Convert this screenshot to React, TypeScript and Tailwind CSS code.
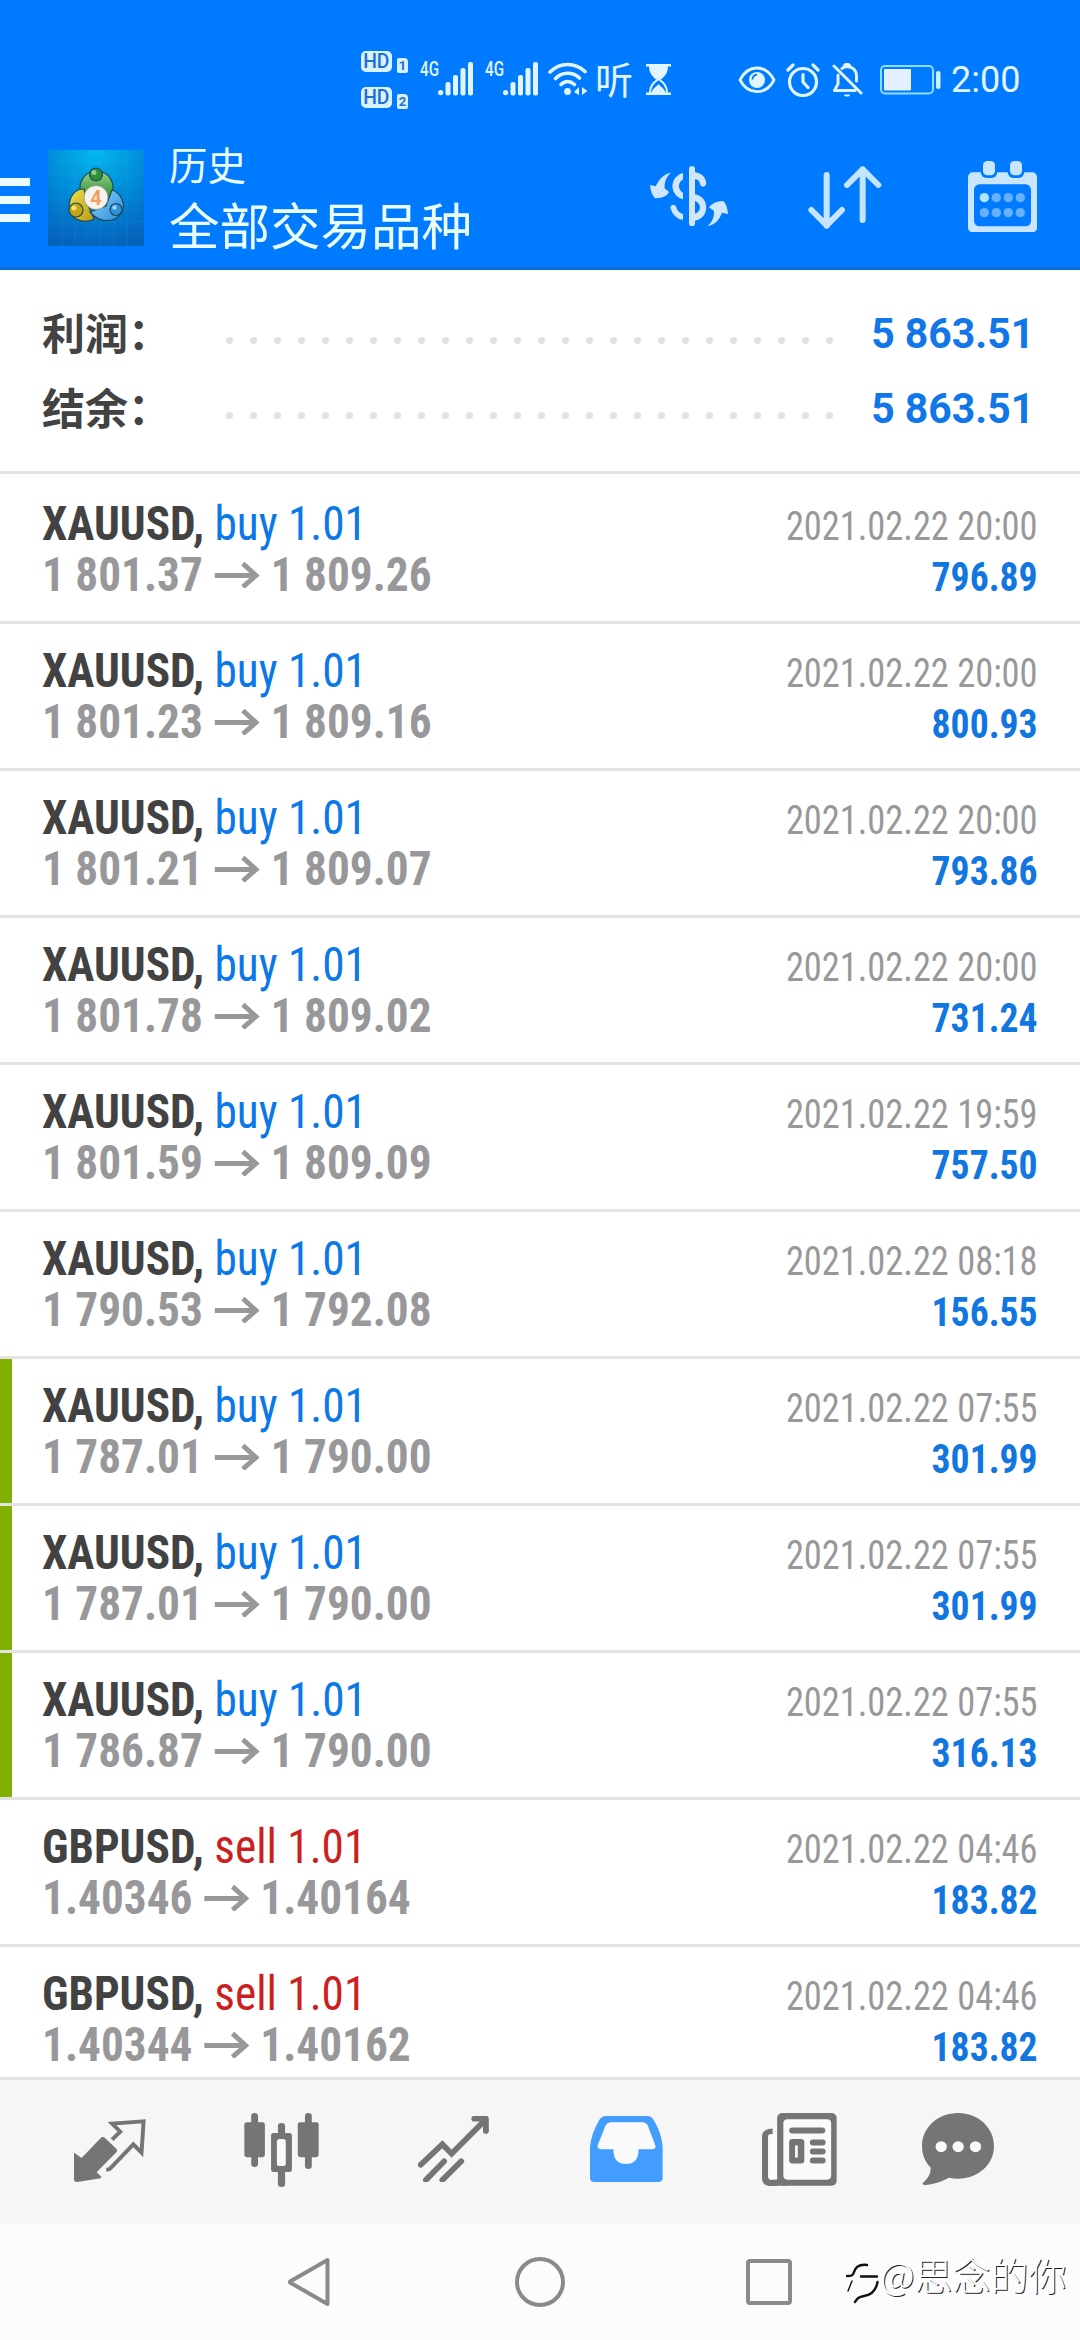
import { clsx } from "clsx";
import type { ReactNode } from "react";

interface Deal {
  symbol: string;
  side: "buy" | "sell";
  open: string;
  close: string;
  time: string;
  profit: string;
  marked?: boolean;
}

const DEALS: Deal[] = [
  { symbol: "XAUUSD", side: "buy", open: "1 801.37", close: "1 809.26", time: "2021.02.22 20:00", profit: "796.89" },
  { symbol: "XAUUSD", side: "buy", open: "1 801.23", close: "1 809.16", time: "2021.02.22 20:00", profit: "800.93" },
  { symbol: "XAUUSD", side: "buy", open: "1 801.21", close: "1 809.07", time: "2021.02.22 20:00", profit: "793.86" },
  { symbol: "XAUUSD", side: "buy", open: "1 801.78", close: "1 809.02", time: "2021.02.22 20:00", profit: "731.24" },
  { symbol: "XAUUSD", side: "buy", open: "1 801.59", close: "1 809.09", time: "2021.02.22 19:59", profit: "757.50" },
  { symbol: "XAUUSD", side: "buy", open: "1 790.53", close: "1 792.08", time: "2021.02.22 08:18", profit: "156.55" },
  { symbol: "XAUUSD", side: "buy", open: "1 787.01", close: "1 790.00", time: "2021.02.22 07:55", profit: "301.99", marked: true },
  { symbol: "XAUUSD", side: "buy", open: "1 787.01", close: "1 790.00", time: "2021.02.22 07:55", profit: "301.99", marked: true },
  { symbol: "XAUUSD", side: "buy", open: "1 786.87", close: "1 790.00", time: "2021.02.22 07:55", profit: "316.13", marked: true },
  { symbol: "GBPUSD", side: "sell", open: "1.40346", close: "1.40164", time: "2021.02.22 04:46", profit: "183.82" },
  { symbol: "GBPUSD", side: "sell", open: "1.40344", close: "1.40162", time: "2021.02.22 04:46", profit: "183.82" },
];

const SUMMARY = [
  { label: "利润：", value: "5 863.51" },
  { label: "结余：", value: "5 863.51" },
];

function HdBadge({ sim }: { sim: string }) {
  return (
    <div className="flex h-[22px] items-end gap-[5px]">
      <div className="flex h-[21px] w-[31px] items-center justify-center self-start rounded-[5px] bg-[#d8f2ff] text-[21px] leading-none font-medium text-[#1f6fd6]">
        <span className="scale-x-[0.92]">HD</span>
      </div>
      <div className="flex h-[15px] w-[11px] items-center justify-center rounded-[2px] rounded-tr-[4px] bg-[#d8f2ff] text-[13px] leading-none font-bold text-[#1f6fd6]">
        {sim}
      </div>
    </div>
  );
}

function Signal() {
  return (
    <div className="flex h-[34px] w-[53px]">
      <span className="h-4 w-[18px] origin-left scale-x-[0.76] text-[20px] leading-[15px] font-medium">4G</span>
      <svg className="h-[34px] w-[35px]" viewBox="0 0 35 34" fill="currentColor">
        <circle cx="2.6" cy="30.6" r="2.6" />
        <rect x="7.5" y="20" width="5" height="13.5" rx="2" />
        <rect x="15" y="13" width="5" height="20.5" rx="2" />
        <rect x="22.5" y="6" width="5" height="27.5" rx="2" />
        <rect x="30" y="0" width="5" height="33.5" rx="2" />
      </svg>
    </div>
  );
}

function StatusBar() {
  return (
    <div className="flex h-[120px] items-start pt-[51px] pl-[361px] text-[#e0f5ff]">
      <div className="flex w-[47px] flex-col gap-[14px]">
        <HdBadge sim="1" />
        <HdBadge sim="2" />
      </div>
      <div className="ml-3 flex gap-3 pt-[11px]">
        <Signal />
        <Signal />
      </div>
      <svg className="mt-[11px] ml-[10px] h-[34px] w-[40px]" viewBox="0 0 40 34" fill="none" stroke="currentColor" strokeWidth="3.6" strokeLinecap="round">
        <path d="M2 10C12 0 27 0 37 9.5" />
        <path d="M7.5 16.5C14 9.5 25 9.5 31.5 16" />
        <path d="M13 22.5C17 18.5 22 18.5 26.5 22.5" />
        <circle cx="19.5" cy="29.5" r="3.4" fill="currentColor" stroke="none" />
        <path d="M26 30l5-5v8zM34 25l5.5 4-5.5 4z" fill="currentColor" stroke="none" />
      </svg>
      <span className="mt-[8px] ml-[7px] w-[37px] font-['Noto_Sans_CJK_SC',sans-serif] text-[38px] leading-[38px]">听</span>
      <svg className="mt-[13px] ml-[14px] h-[31px] w-[26px]" viewBox="0 0 26 31" fill="currentColor">
        <path d="M0 0h25v2.6H0zM0 28.4h25V31H0zM3 2h19c0 8-4 10.500-7 13.500h-5C7 12.500 3 10 3 2z" />
        <path d="M12.500 15C7 19 4 22 4 29M12.500 15C18 19 21 22 21 29" fill="none" stroke="currentColor" strokeWidth="2" />
        <path d="M12.500 20c2 3 6 4 7 9H5.500c1-5 5-6 7-9z" />
      </svg>
      <svg className="mt-[15px] ml-[66px] h-[28px] w-[38px]" viewBox="0 0 38 28" fill="none" stroke="currentColor" strokeWidth="2.800">
        <path d="M2 14C10-2 28-2 36 14C28 29.500 10 29.500 2 14z" strokeLinejoin="round" />
        <circle cx="19" cy="14" r="8" fill="currentColor" stroke="none" />
        <path d="M14.500 13.500c0-3 1.500-4.500 4.500-4.800" stroke="#007aff" strokeWidth="1.800" />
      </svg>
      <svg className="mt-[12px] ml-[10px] h-[34px] w-[34px]" viewBox="0 0 34 34" fill="none" stroke="currentColor" strokeWidth="3.200" strokeLinecap="round" strokeLinejoin="round">
        <circle cx="17" cy="19" r="13.500" />
        <path d="M17 11.500V19l5 5.500M2 7l5-5M32 7l-5-5" />
      </svg>
      <svg className="mt-[12px] ml-[12px] h-[34px] w-[31px]" viewBox="0 0 31 34" fill="none" stroke="currentColor" strokeWidth="3" strokeLinecap="round" strokeLinejoin="round">
        <path d="M2 3l27 27" />
        <path d="M6 12v9l-3.500 6.500H23M10 5.500C11.500 4 13 3.500 15 3.500C21.500 4 24.500 8 24.500 13v5M12.500 2.500a3 2.500 0 0 1 5 0" />
        <path d="M12 31.500a3 2 0 0 0 6 0z" fill="currentColor" stroke="none" />
      </svg>
      <svg className="mt-[14px] ml-[17px] h-[30px] w-[61px]" viewBox="0 0 61 30">
        <rect x="1" y="1" width="52" height="27.500" rx="4" fill="none" stroke="#8fdcff" strokeWidth="2" />
        <rect x="4" y="4" width="27" height="21.500" rx="1" fill="#e3f0ff" />
        <rect x="56" y="6" width="4.500" height="18" rx="2" fill="#cdeeff" />
      </svg>
      <span className="mt-[8px] ml-[10px] text-[36px] leading-[42px]">2:00</span>
    </div>
  );
}

function AppLogo() {
  return (
    <svg className="ml-[18px] h-24 w-24" viewBox="0 0 96 96">
      <defs>
        <radialGradient id="sky" cx="0.5" cy="0" r="1">
          <stop offset="0" stopColor="#04b8ee" />
          <stop offset="0.5" stopColor="#008cd8" />
          <stop offset="1" stopColor="#0563bc" />
        </radialGradient>
        <linearGradient id="green" x1="0" y1="0" x2="0" y2="1">
          <stop offset="0" stopColor="#9bd08a" />
          <stop offset="1" stopColor="#1f8a26" />
        </linearGradient>
        <linearGradient id="gold" x1="0" y1="0" x2="1" y2="1">
          <stop offset="0" stopColor="#f0e04a" />
          <stop offset="1" stopColor="#b89c14" />
        </linearGradient>
        <linearGradient id="blue" x1="0" y1="0" x2="1" y2="1">
          <stop offset="0" stopColor="#8fd4ff" />
          <stop offset="1" stopColor="#2a8bd6" />
        </linearGradient>
      </defs>
      <rect width="96" height="96" fill="url(#sky)" />
      <path d="M0 13h96M0 24h96M0 36h96M0 48h96M0 60h96M0 72h96M0 84h96M14 0v96M27 0v96M40 0v96M53 0v96M66 0v96M79 0v96" stroke="#5fd0ff" strokeOpacity="0.1" />
      <g stroke="#1b4a5c" strokeWidth="1.200">
        <path d="M32 41C31 28 40 21 48 21C58 21 66 28 65 41L60 50L36 42z" fill="url(#green)" />
        <path d="M36 39C26 39 21 47 21 59C22 68 34 75 46 69L38 50z" fill="url(#gold)" />
        <path d="M64 40C73 43 78 54 74 62C68 73 52 74 42 62L58 56z" fill="url(#blue)" />
        <circle cx="48" cy="24.500" r="6.500" fill="#2f8f38" />
        <circle cx="28" cy="60" r="7" fill="#c3a414" />
        <circle cx="68" cy="59.500" r="6" fill="#2f8fdc" />
      </g>
      <circle cx="46" cy="22.500" r="2.500" fill="#8bcf86" />
      <circle cx="26" cy="58" r="2.500" fill="#f2e472" />
      <circle cx="66.500" cy="57.500" r="2.200" fill="#9ad6ff" />
      <circle cx="48" cy="47.500" r="12" fill="#f7f2f0" stroke="#8a9a8a" strokeWidth="0.800" />
      <text x="48" y="55" textAnchor="middle" fontSize="20" fontWeight="700" fontFamily="Roboto, sans-serif" fill="#f0a060">4</text>
    </svg>
  );
}

function Header() {
  return (
    <header className="h-[270px] border-b-[3px] border-[#0a6cdb] bg-[#007aff]">
      <StatusBar />
      <div className="flex h-[147px] items-start pt-[30px]">
        <div className="mt-[28px] flex w-[30px] flex-col gap-[10px]">
          <i className="h-2 bg-[#eafaff]" />
          <i className="h-2 bg-[#eafaff]" />
          <i className="h-2 bg-[#eafaff]" />
        </div>
        <AppLogo />
        <div className="-mt-[9px] ml-[25px] w-[481px] font-['Noto_Sans_CJK_SC',sans-serif] text-[#eafdff]">
          <div className="text-[38.5px] leading-[44px]">历史</div>
          <h1 className="mt-[8px] text-[50.5px] leading-[60px] font-normal">全部交易品种</h1>
        </div>
        <svg className="mt-4 h-[60px] w-[78px] text-[#cfe6fd]" viewBox="93 78 234 180" fill="currentColor">
          <path d="M155 98C140 113 136 128 137 145L150 156C144 169 132 173 109 175C100 168 95 152 93 135L110 139C120 119 132 103 155 98z" />
          <path d="M265 258C281 246 286 230 285 213L270 202C279 190 292 184 313 183C321 191 326 205 327 222L309 218C301 240 288 254 265 258z" />
          <path d="M192 99C150 110 150 166 192 178V158C176 150 176 128 192 118z" />
          <path d="M163 203Q170 227 192 231" fill="none" stroke="currentColor" strokeWidth="17" strokeLinecap="round" />
          <rect x="192" y="210" width="18" height="40" fill="#007aff" />
          <rect x="210" y="78" width="18" height="181" rx="9" />
          <path d="M228 97C248 99 260 112 262 130C260 142 248 144 244 134C242 124 237 118 228 118z" />
          <path d="M228 163C273 170 273 236 228 242V221C248 216 248 190 228 183z" />
        </svg>
        <svg className="mt-4 ml-[80px] h-[63px] w-[74px]" viewBox="568 78 222 189" fill="none" stroke="#c4e4ff" strokeWidth="18" strokeLinecap="round" strokeLinejoin="round">
          <path d="M624 105V257M578 210L624 256L670 210M732 240V88M685 135L732 88L779 135" />
        </svg>
        <svg className="mt-[11px] ml-[86px] h-[71px] w-[69px]" viewBox="1044 62 207 213">
          <rect x="1044" y="96" width="207" height="180" rx="14" fill="#c9e5ff" />
          <rect x="1062" y="132" width="171" height="126" rx="16" fill="#007aff" />
          <rect x="1082" y="56" width="50" height="57" rx="18" fill="#007aff" />
          <rect x="1163" y="56" width="50" height="57" rx="18" fill="#007aff" />
          <rect x="1089" y="62" width="36" height="43" rx="13" fill="#c9e5ff" />
          <rect x="1170" y="62" width="36" height="43" rx="13" fill="#c9e5ff" />
          <circle cx="1093" cy="172" r="14" fill="#b5e2ff" />
          <g fill="#66b0ff">
            <circle cx="1129" cy="172" r="14" />
            <circle cx="1165" cy="172" r="14" />
            <circle cx="1201" cy="172" r="14" />
            <circle cx="1093" cy="217" r="14" />
            <circle cx="1129" cy="217" r="14" />
            <circle cx="1165" cy="217" r="14" />
            <circle cx="1201" cy="217" r="14" />
          </g>
        </svg>
      </div>
    </header>
  );
}

function DealRow({ deal }: { deal: Deal }) {
  return (
    <li className="flex h-[147px] shrink-0 border-b-[3px] border-[#e3e3e3]">
      <div className={clsx("w-3 shrink-0", deal.marked && "bg-[#80b000]")} />
      <div className="flex flex-1 justify-between pt-[21px] pr-[42px] pl-[30px] font-['Roboto_Condensed',Roboto,sans-serif] [font-stretch:75%]">
        <div className="origin-left scale-x-[0.943] text-[48px] leading-[51px] font-bold whitespace-nowrap">
          <div className="text-[#424242]">
            {deal.symbol},{" "}
            <span className={clsx("font-normal", deal.side === "buy" ? "text-[#0a78e6]" : "text-[#cc1f1f]")}>{deal.side} 1.01</span>
          </div>
          <div className="flex items-center text-[#98989a]">
            {deal.open}
            <svg className="mr-[12px] ml-[12px] h-[26px] w-[48px]" viewBox="0 0 48 26" fill="none" stroke="currentColor" strokeWidth="5">
              <path d="M0 13.500H44M30 1.500L44 13.500L30 25" />
            </svg>
            {deal.close}
          </div>
        </div>
        <div className="pt-[3px] text-right text-[40px] leading-[51px] whitespace-nowrap">
          <div className="origin-right scale-x-[0.91] text-[#98989a]">{deal.time}</div>
          <div className="origin-right scale-x-[0.94] font-bold text-[#1176e0]">{deal.profit}</div>
        </div>
      </div>
    </li>
  );
}

function TabIcon({ className, viewBox, children }: { className: string; viewBox: string; children: ReactNode }) {
  return (
    <svg className={clsx("shrink-0", className)} viewBox={viewBox} preserveAspectRatio="none" fill="#757575">
      {children}
    </svg>
  );
}

function TabBar() {
  return (
    <nav className="flex h-[147px] shrink-0 items-start border-t-[3px] border-[#e3e3e3] bg-[#f6f6f6] pl-[74px]">
      <TabIcon className="mt-[39px] h-[63px] w-[72px]" viewBox="215 177 210 189">
        <path d="M299 230Q303 231 306 235L340 268V275L281 337L295 350L293 355L224 366Q215 366 215 358V278L220 281L237 294L293 234Q296 231 299 230z" />
        <path d="M326 239L350 215L326 191L418 184L412 278L388 253L321 325Q317 329 309 329" fill="none" stroke="#757575" strokeWidth="11.500" />
      </TabIcon>
      <TabIcon className="mt-[33px] ml-[98px] h-[74px] w-[75px]" viewBox="708 158 219 223">
        <rect x="729" y="158" width="20" height="163" rx="10" />
        <rect x="709" y="186" width="60" height="105" rx="7" />
        <rect x="886" y="158" width="20" height="169" rx="10" />
        <rect x="865" y="186" width="61" height="105" rx="7" />
        <rect x="807" y="188" width="21" height="193" rx="10" />
        <rect x="787" y="218" width="61" height="118" rx="7" />
        <rect x="804" y="236" width="26" height="82" rx="8" fill="#f9f9f9" />
      </TabIcon>
      <TabIcon className="mt-[36px] ml-[99px] h-[66px] w-[71px]" viewBox="1213 168 207 198">
        <path d="M1221 314L1284 253L1311 281L1405 184M1236 360L1289 304M1284 360L1339 304" fill="none" stroke="#757575" strokeWidth="17" strokeLinecap="round" />
        <path d="M1377 176H1411V213" fill="none" stroke="#757575" strokeWidth="17" strokeLinecap="round" strokeLinejoin="round" />
      </TabIcon>
      <TabIcon className="mt-[36px] ml-[101px] h-[66px] w-[73px]" viewBox="146 167 211 199">
        <path d="M190 167H313Q323 168 330 179Q354 220 356 262V355Q355 366 344 366H158Q147 366 146 355V262Q149 220 173 179Q180 168 190 167z" fill="#429dff" />
        <path d="M205 186H298Q309 187 313 196L335 256Q337 266 328 267H286V276Q284 310 250 312Q216 310 214 276V267H178Q166 266 168 256L191 196Q195 187 205 186z" fill="#fafafa" />
      </TabIcon>
      <TabIcon className="mt-[33px] ml-[99px] h-[73px] w-[75px]" viewBox="646 158 218 218">
        <path d="M677 204V221Q664 221 664 228V347Q664 357 672 357H690V376H668Q646 374 646 353V225Q648 205 677 204z" />
        <path d="M664 228Q665 221 677 221H690V357H672Q664 356 664 347z" fill="#fafafa" />
        <rect x="690" y="158" width="173" height="217" rx="15" />
        <rect x="676" y="357" width="40" height="18" />
        <rect x="708" y="177" width="139" height="180" rx="12" fill="#fafafa" />
        <rect x="725" y="201" width="105" height="18" rx="9" />
        <rect x="725" y="236" width="44" height="73" rx="9" />
        <rect x="742" y="255" width="8" height="36" fill="#fafafa" />
        <rect x="785" y="237" width="46" height="18" rx="9" />
        <rect x="785" y="264" width="46" height="18" rx="9" />
        <rect x="785" y="291" width="46" height="18" rx="9" />
      </TabIcon>
      <TabIcon className="mt-[33px] ml-[85px] h-[72px] w-[72px]" viewBox="1108 158 210 218">
        <path d="M1213 158C1272 158 1318 202 1318 258C1318 314 1272 357 1213 357Q1198 357 1186 354C1165 366 1140 375 1116 376Q1106 375 1111 369C1125 356 1134 343 1133 323C1116 305 1108 282 1108 258C1108 202 1154 158 1213 158z" />
        <g fill="#fafafa">
          <circle cx="1164" cy="260" r="16.500" />
          <circle cx="1213.500" cy="260" r="16.500" />
          <circle cx="1264" cy="260" r="16.500" />
        </g>
      </TabIcon>
    </nav>
  );
}

function SystemNav() {
  return (
    <div className="flex h-[116px] shrink-0 items-start bg-[#fcfcfc] pl-[287px]">
      <svg className="mt-[33px] h-[50px] w-[43px]" viewBox="0 0 43 50" fill="none" stroke="#8a8a8a" strokeWidth="4" strokeLinejoin="round">
        <path d="M40.500 3V47L3 25.500V24.500z" />
      </svg>
      <svg className="mt-[33px] ml-[185px] h-[50px] w-[50px]" viewBox="0 0 50 50" fill="none" stroke="#8a8a8a" strokeWidth="4">
        <circle cx="25" cy="25" r="23" />
      </svg>
      <div className="mt-[35px] ml-[181px] h-[46px] w-[46px] rounded-[4px] border-4 border-[#8a8a8a]" />
      <svg className="mt-[38px] ml-[54px] h-[42px] w-[33px]" viewBox="0 0 33 42" fill="none" stroke="#111" strokeLinecap="round">
        <path d="M1 14C5 14 7 14 8 10C10 4 14 2 21 3M15 14.500H31" strokeWidth="2.400" />
        <path d="M31.500 20C30 29 25 33 18 34C12 35 11 37 9 40" strokeWidth="2.400" />
        <path d="M6 19L2 29" strokeWidth="1.400" />
      </svg>
      <span className="mt-[23px] ml-px font-['Noto_Sans_CJK_SC',sans-serif] text-[38px] leading-[54px] font-light whitespace-nowrap text-white [text-shadow:1px_1px_0.5px_#222]">
        @思念的你
      </span>
    </div>
  );
}

export default function App() {
  return (
    <div className="flex h-[2340px] w-[1080px] flex-col overflow-hidden bg-white font-[Roboto,'Noto_Sans_CJK_SC',sans-serif]">
      <Header />
      <section className="h-[204px] shrink-0 border-b-[3px] border-[#e3e3e3] pt-[26px]">
        {SUMMARY.map((item) => (
          <div key={item.label} className="flex h-[75px] items-center pr-[46px] pl-[42px] text-[42px] font-bold">
            <span className="-mt-[5px] w-[184px] font-['Noto_Sans_CJK_SC',sans-serif] text-[43px] text-[#424242]">{item.label}</span>
            <span className="mt-[14px] flex flex-1 gap-[17px]">
              {Array.from({ length: 26 }, (_, i) => (
                <i key={i} className="size-[7px] shrink-0 rounded-full bg-[#e2e2e2]" />
              ))}
            </span>
            <span className="origin-right scale-x-[0.975] text-[#1176e8]">{item.value}</span>
          </div>
        ))}
      </section>
      <ul className="flex min-h-0 flex-1 flex-col overflow-hidden pt-[3px]">
        {DEALS.map((deal, i) => (
          <DealRow key={i} deal={deal} />
        ))}
      </ul>
      <TabBar />
      <SystemNav />
    </div>
  );
}
